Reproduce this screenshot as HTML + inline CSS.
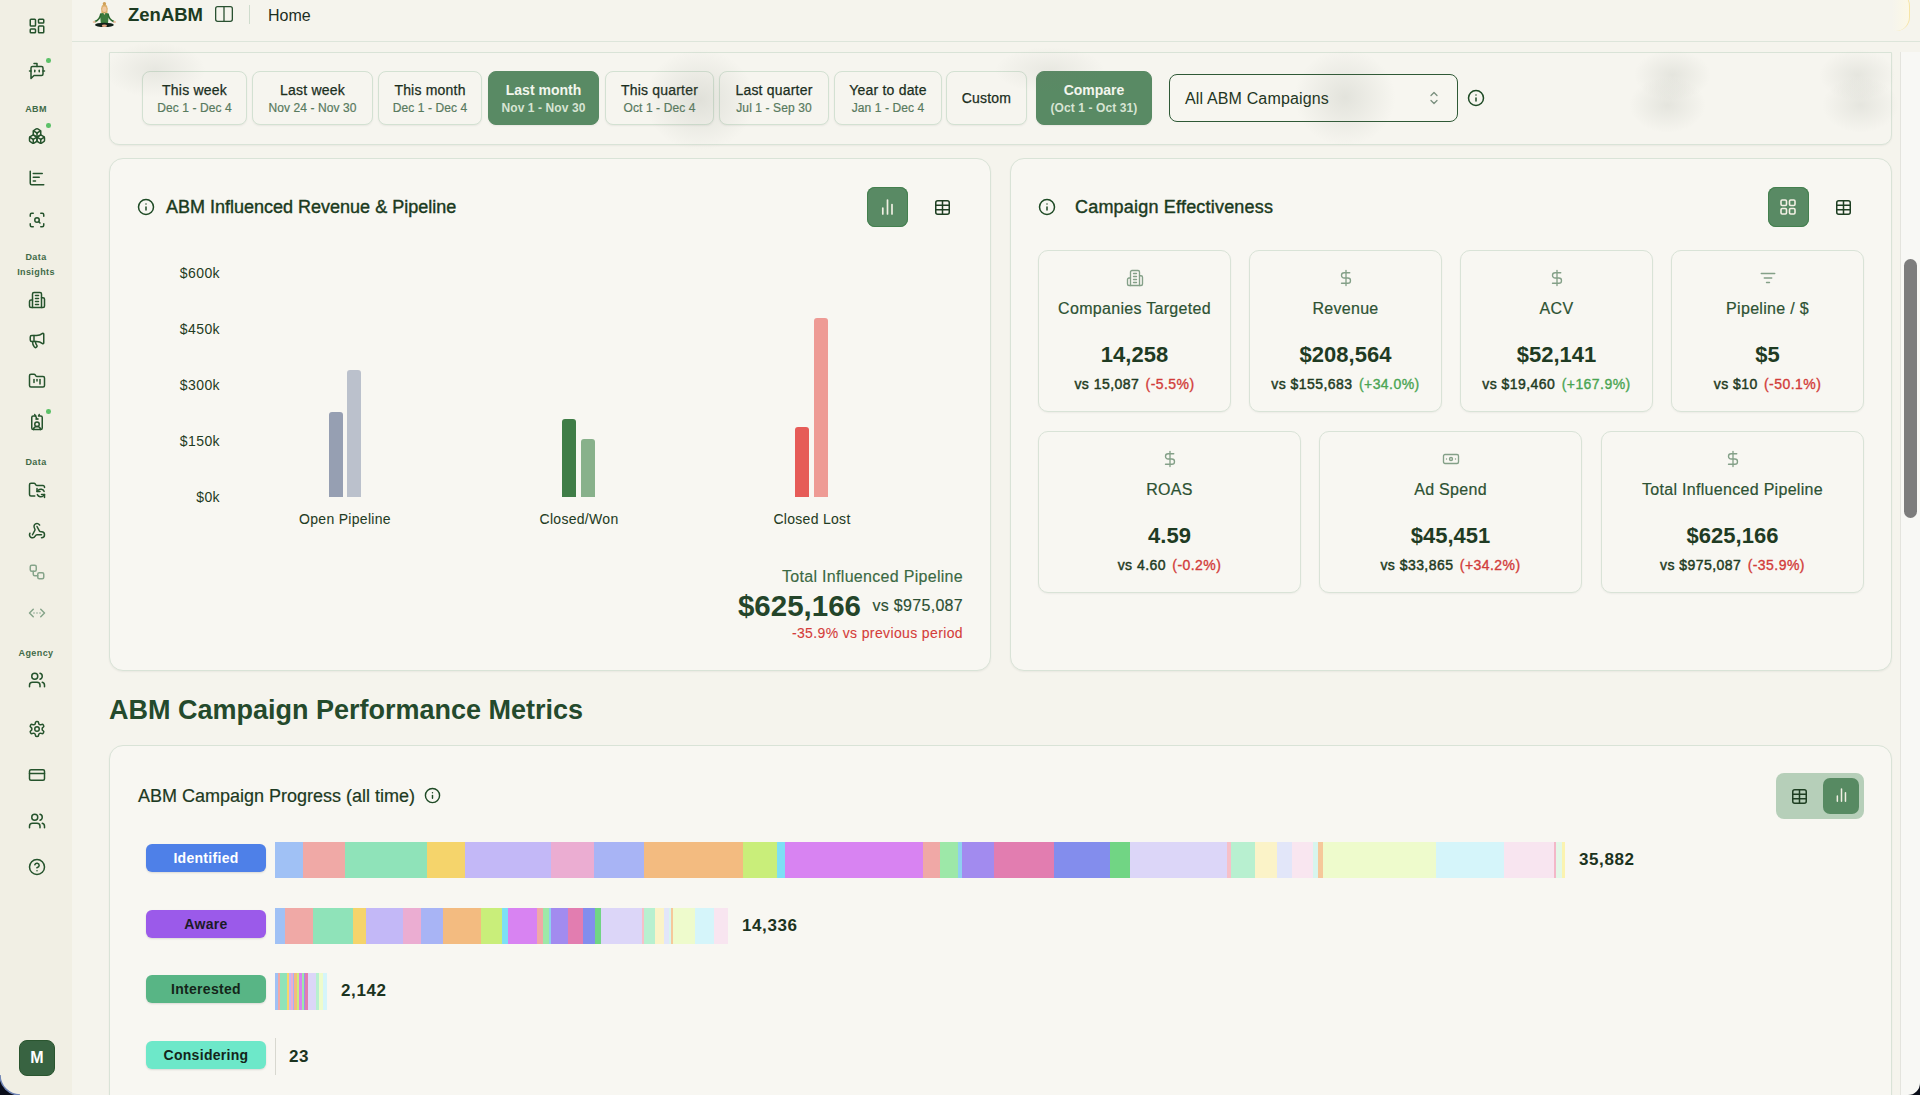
<!DOCTYPE html>
<html><head><meta charset="utf-8">
<style>
*{box-sizing:border-box;margin:0;padding:0}
html,body{width:1920px;height:1095px;overflow:hidden}
body{font-family:"Liberation Sans",sans-serif;background:#f5f4ed;color:#1e3a22;position:relative}
.abs{position:absolute}
.nw{white-space:nowrap}
#side{left:0;top:0;width:72px;height:1095px;background:#f1efe4}
#hdr{left:72px;top:0;width:1848px;height:42px;border-bottom:1px solid #dde5da;background:#f5f4ed}
.card{position:absolute;background:#f8f7f2;border:1px solid #d9e3d7;border-radius:14px;box-shadow:0 1px 2px rgba(0,0,0,.05)}
.btn{position:absolute;top:71px;height:54px;border:1px solid #d3e1d2;border-radius:8px;background:#f6f5ef;text-align:center;box-shadow:0 1px 2px rgba(0,0,0,.06)}
.btn .t{position:absolute;left:0;right:0;top:10px;font-size:14px;color:#1b2e1d;white-space:nowrap;letter-spacing:.2px;-webkit-text-stroke:.25px #1b2e1d}
.btn .d{position:absolute;left:0;right:0;top:29px;font-size:12px;color:#587a5e;white-space:nowrap;-webkit-text-stroke:.2px #587a5e;letter-spacing:.1px}
.btn.g{background:#598a64;border-color:#598a64}
.btn.g .t{color:#f3f6ee;font-weight:bold;letter-spacing:0;-webkit-text-stroke:0}
.btn.g .d{color:#d7e4d3;font-weight:bold;-webkit-text-stroke:0}
.dot{width:4.6px;height:4.6px;border-radius:50%;background:#5cc168;margin:.4px 0 0 .2px}
.slab{left:0;width:72px;text-align:center;font-size:9px;font-weight:bold;color:#3f6a47;line-height:12px;letter-spacing:.4px}
.ic{position:absolute;fill:none;stroke-linecap:round;stroke-linejoin:round}
.mc{position:absolute;border:1px solid #d9e3d7;border-radius:10px;background:#f8f7f2;box-shadow:0 1px 2px rgba(0,0,0,.05);text-align:center}
.mc .l{position:absolute;left:0;right:0;top:49px;font-size:16px;color:#2d5233;white-space:nowrap;letter-spacing:.3px;-webkit-text-stroke:.2px #2d5233}
.mc .v{position:absolute;left:0;right:0;top:91px;font-size:22px;font-weight:bold;color:#1f3b23;white-space:nowrap}
.mc .c{position:absolute;left:0;right:0;top:125px;font-size:14px;color:#1f3b23;white-space:nowrap;letter-spacing:.45px;-webkit-text-stroke:.45px #1f3b23}
.mc .c span{margin-left:2px;-webkit-text-stroke:.35px currentColor}
.red{color:#d23c3a}.grn{color:#4aa552}
.ylab{position:absolute;left:140px;width:80px;text-align:right;font-size:14px;color:#1f3b23;letter-spacing:.4px}
.bar{position:absolute;border-radius:3px 3px 0 0}
.xlab{position:absolute;width:160px;text-align:center;font-size:14px;color:#1f3b23;top:511px;letter-spacing:.3px;-webkit-text-stroke:.05px #1f3b23}
.badge{position:absolute;left:146px;width:120px;height:28px;border-radius:6px;text-align:center;font-size:14px;font-weight:bold;line-height:28px;letter-spacing:.3px;box-shadow:0 1px 2px rgba(0,0,0,.12)}
.num{position:absolute;font-size:17px;font-weight:bold;color:#1c3320;margin-top:0;letter-spacing:.6px}
.seg{position:absolute}
</style></head>
<body>
<div id="side" class="abs"></div>
<svg class="abs" style="left:27.5px;top:16.5px" width="18" height="18" viewBox="0 0 24 24" fill="none" stroke="#25532c" stroke-width="2" stroke-linecap="round" stroke-linejoin="round"><rect x="3" y="3" width="7" height="9" rx="1"/><rect x="14" y="3" width="7" height="5" rx="1"/><rect x="14" y="12" width="7" height="9" rx="1"/><rect x="3" y="16" width="7" height="5" rx="1"/></svg>
<svg class="abs" style="left:27.5px;top:62px" width="18" height="18" viewBox="0 0 24 24" fill="none" stroke="#25532c" stroke-width="2" stroke-linecap="round" stroke-linejoin="round"><path d="M12 6V2H8"/><path d="m8 18-4 4V8a2 2 0 0 1 2-2h12a2 2 0 0 1 2 2v8a2 2 0 0 1-2 2Z"/><path d="M2 12h2"/><path d="M9 11v2"/><path d="M15 11v2"/><path d="M20 12h2"/></svg>
<div class="abs dot" style="left:46px;top:58px"></div>
<svg class="abs" style="left:27.5px;top:127px" width="18" height="18" viewBox="0 0 24 24" fill="none" stroke="#25532c" stroke-width="2" stroke-linecap="round" stroke-linejoin="round"><path d="M2.97 12.92A2 2 0 0 0 2 14.63v3.24a2 2 0 0 0 .97 1.71l3 1.8a2 2 0 0 0 2.06 0L12 19v-5.5l-5-3-4.03 2.42Z"/><path d="m7 16.5-4.74-2.85"/><path d="m7 16.5 5-3"/><path d="M7 16.5v5.17"/><path d="M12 13.5V19l3.97 2.38a2 2 0 0 0 2.06 0l3-1.8a2 2 0 0 0 .97-1.71v-3.24a2 2 0 0 0-.97-1.71L17 10.5l-5 3Z"/><path d="m17 16.5-5-3"/><path d="m17 16.5 4.74-2.85"/><path d="M17 16.5v5.17"/><path d="M7.97 4.42A2 2 0 0 0 7 6.13v4.37l5 3 5-3V6.13a2 2 0 0 0-.97-1.71l-3-1.8a2 2 0 0 0-2.06 0l-3 1.8Z"/><path d="M12 8 7.26 5.15"/><path d="m12 8 4.74-2.85"/><path d="M12 13.5V8"/></svg>
<div class="abs dot" style="left:46px;top:123px"></div>
<svg class="abs" style="left:27.5px;top:169px" width="18" height="18" viewBox="0 0 24 24" fill="none" stroke="#25532c" stroke-width="2" stroke-linecap="round" stroke-linejoin="round"><path d="M3 3v16a2 2 0 0 0 2 2h16"/><path d="M7 11h8"/><path d="M7 16h3"/><path d="M7 6h12"/></svg>
<svg class="abs" style="left:27.5px;top:210.5px" width="18" height="18" viewBox="0 0 24 24" fill="none" stroke="#25532c" stroke-width="2" stroke-linecap="round" stroke-linejoin="round"><path d="M3 7V5a2 2 0 0 1 2-2h2"/><path d="M17 3h2a2 2 0 0 1 2 2v2"/><path d="M21 17v2a2 2 0 0 1-2 2h-2"/><path d="M7 21H5a2 2 0 0 1-2-2v-2"/><circle cx="12" cy="12" r="3"/><path d="m16 16-1.9-1.9"/></svg>
<svg class="abs" style="left:27.5px;top:290.5px" width="18" height="18" viewBox="0 0 24 24" fill="none" stroke="#25532c" stroke-width="2" stroke-linecap="round" stroke-linejoin="round"><path d="M6 22V4a2 2 0 0 1 2-2h8a2 2 0 0 1 2 2v18Z"/><path d="M6 12H4a2 2 0 0 0-2 2v6a2 2 0 0 0 2 2h2"/><path d="M18 9h2a2 2 0 0 1 2 2v9a2 2 0 0 1-2 2h-2"/><path d="M10 6h4"/><path d="M10 10h4"/><path d="M10 14h4"/><path d="M10 18h4"/></svg>
<svg class="abs" style="left:27.5px;top:331px" width="18" height="18" viewBox="0 0 24 24" fill="none" stroke="#25532c" stroke-width="2" stroke-linecap="round" stroke-linejoin="round"><path d="M11 6a13 13 0 0 0 8.4-2.8A1 1 0 0 1 21 4v12a1 1 0 0 1-1.6.8A13 13 0 0 0 11 14H5a2 2 0 0 1-2-2V8a2 2 0 0 1 2-2z"/><path d="M6 14a12 12 0 0 0 2.4 7.2 2 2 0 0 0 3.2-2.4A8 8 0 0 1 10 14"/><path d="M8 6v8"/></svg>
<svg class="abs" style="left:27.5px;top:372px" width="18" height="18" viewBox="0 0 24 24" fill="none" stroke="#25532c" stroke-width="2" stroke-linecap="round" stroke-linejoin="round"><path d="M4 20h16a2 2 0 0 0 2-2V8a2 2 0 0 0-2-2h-7.93a2 2 0 0 1-1.66-.9l-.82-1.2A2 2 0 0 0 7.93 3H4a2 2 0 0 0-2 2v13c0 1.1.9 2 2 2Z"/><path d="M8 10v4"/><path d="M12 10v2"/><path d="M16 10v6"/></svg>
<svg class="abs" style="left:27.5px;top:413px" width="18" height="18" viewBox="0 0 24 24" fill="none" stroke="#25532c" stroke-width="2" stroke-linecap="round" stroke-linejoin="round"><path d="M13.5 8h-3"/><path d="m15 2-1 2h3a2 2 0 0 1 2 2v14a2 2 0 0 1-2 2H7a2 2 0 0 1-2-2V6a2 2 0 0 1 2-2h3.5"/><path d="M16.899 22A5 5 0 0 0 7.1 22"/><path d="m9 2 3 6"/><circle cx="12" cy="15" r="3"/></svg>
<div class="abs dot" style="left:46px;top:409px"></div>
<svg class="abs" style="left:27.5px;top:481px" width="18" height="18" viewBox="0 0 24 24" fill="none" stroke="#25532c" stroke-width="2" stroke-linecap="round" stroke-linejoin="round"><path d="M9 20H4a2 2 0 0 1-2-2V5a2 2 0 0 1 2-2h3.9a2 2 0 0 1 1.69.9l.81 1.2a2 2 0 0 0 1.67.9H20a2 2 0 0 1 2 2v.5"/><path d="M12 10v4h4"/><path d="m12 14 1.535-1.605a5 5 0 0 1 8 1.5"/><path d="M22 22v-4h-4"/><path d="m22 18-1.535 1.605a5 5 0 0 1-8-1.5"/></svg>
<svg class="abs" style="left:27.5px;top:522px" width="18" height="18" viewBox="0 0 24 24" fill="none" stroke="#25532c" stroke-width="2" stroke-linecap="round" stroke-linejoin="round"><path d="M18 16.98h-5.99c-1.1 0-1.95.94-2.48 1.9A4 4 0 0 1 2 17c.01-.7.2-1.4.57-2"/><path d="m6 17 3.13-5.78c.53-.97.1-2.18-.5-3.1a4 4 0 1 1 6.89-4.06"/><path d="m12 6 3.13 5.73C15.66 12.7 16.9 13 18 13a4 4 0 0 1 0 8"/></svg>
<svg class="abs" style="left:27.5px;top:563px" width="18" height="18" viewBox="0 0 24 24" fill="none" stroke="#86a48a" stroke-width="2" stroke-linecap="round" stroke-linejoin="round"><rect width="8" height="8" x="3" y="3" rx="2"/><path d="M7 11v4a2 2 0 0 0 2 2h4"/><rect width="8" height="8" x="13" y="13" rx="2"/></svg>
<svg class="abs" style="left:27.5px;top:604px" width="18" height="18" viewBox="0 0 24 24" fill="none" stroke="#86a48a" stroke-width="2" stroke-linecap="round" stroke-linejoin="round"><path d="M12 12h.01"/><path d="M16 12h.01"/><path d="m17 7 5 5-5 5"/><path d="m7 7-5 5 5 5"/><path d="M8 12h.01"/></svg>
<svg class="abs" style="left:27.5px;top:671px" width="18" height="18" viewBox="0 0 24 24" fill="none" stroke="#25532c" stroke-width="2" stroke-linecap="round" stroke-linejoin="round"><path d="M16 21v-2a4 4 0 0 0-4-4H6a4 4 0 0 0-4 4v2"/><circle cx="9" cy="7" r="4"/><path d="M22 21v-2a4 4 0 0 0-3-3.87"/><path d="M16 3.13a4 4 0 0 1 0 7.75"/></svg>
<svg class="abs" style="left:27.5px;top:719.5px" width="18" height="18" viewBox="0 0 24 24" fill="none" stroke="#25532c" stroke-width="2" stroke-linecap="round" stroke-linejoin="round"><path d="M12.22 2h-.44a2 2 0 0 0-2 2v.18a2 2 0 0 1-1 1.73l-.43.25a2 2 0 0 1-2 0l-.15-.08a2 2 0 0 0-2.73.73l-.22.38a2 2 0 0 0 .73 2.73l.15.1a2 2 0 0 1 1 1.72v.51a2 2 0 0 1-1 1.74l-.15.09a2 2 0 0 0-.73 2.73l.22.38a2 2 0 0 0 2.73.73l.15-.08a2 2 0 0 1 2 0l.43.25a2 2 0 0 1 1 1.73V20a2 2 0 0 0 2 2h.44a2 2 0 0 0 2-2v-.18a2 2 0 0 1 1-1.73l.43-.25a2 2 0 0 1 2 0l.15.08a2 2 0 0 0 2.73-.73l.22-.39a2 2 0 0 0-.73-2.73l-.15-.08a2 2 0 0 1-1-1.74v-.5a2 2 0 0 1 1-1.74l.15-.09a2 2 0 0 0 .73-2.73l-.22-.38a2 2 0 0 0-2.73-.73l-.15.08a2 2 0 0 1-2 0l-.43-.25a2 2 0 0 1-1-1.73V4a2 2 0 0 0-2-2z"/><circle cx="12" cy="12" r="3"/></svg>
<svg class="abs" style="left:27.5px;top:766px" width="18" height="18" viewBox="0 0 24 24" fill="none" stroke="#25532c" stroke-width="2" stroke-linecap="round" stroke-linejoin="round"><rect width="20" height="14" x="2" y="5" rx="2"/><line x1="2" x2="22" y1="10" y2="10"/></svg>
<svg class="abs" style="left:27.5px;top:812px" width="18" height="18" viewBox="0 0 24 24" fill="none" stroke="#25532c" stroke-width="2" stroke-linecap="round" stroke-linejoin="round"><path d="M16 21v-2a4 4 0 0 0-4-4H6a4 4 0 0 0-4 4v2"/><circle cx="9" cy="7" r="4"/><path d="M22 21v-2a4 4 0 0 0-3-3.87"/><path d="M16 3.13a4 4 0 0 1 0 7.75"/></svg>
<svg class="abs" style="left:27.5px;top:858px" width="18" height="18" viewBox="0 0 24 24" fill="none" stroke="#25532c" stroke-width="2" stroke-linecap="round" stroke-linejoin="round"><circle cx="12" cy="12" r="10"/><path d="M9.09 9a3 3 0 0 1 5.83 1c0 2-3 3-3 3"/><path d="M12 17h.01"/></svg>
<div class="abs slab" style="top:103px">ABM</div>
<div class="abs slab" style="top:251px">Data</div>
<div class="abs slab" style="top:265.5px">Insights</div>
<div class="abs slab" style="top:456px">Data</div>
<div class="abs slab" style="top:647px">Agency</div>
<div id="hdr" class="abs"></div>

<svg class="abs" style="left:86px;top:0px" width="40" height="32" viewBox="0 0 40 32">
 <path d="M15.3 8 Q15.2 13 15.6 13.5 L21.2 13.5 Q21.6 13 21.5 8Z" fill="#dcb06c"/>
 <ellipse cx="18.4" cy="8.3" rx="3.1" ry="3.9" fill="#dcb06c"/>
 <circle cx="18.4" cy="3.8" r="1.7" fill="#cf9f55"/>
 <ellipse cx="18.4" cy="9.3" rx="2.1" ry="2.7" fill="#f0c8a0"/>
 <path d="M15.5 13.2 Q18.4 12.4 21.3 13.2 Q22.8 14 22.6 17 L22 23.2 L14.8 23.2 L14.2 17 Q14 14 15.5 13.2Z" fill="#3c7a3c"/>
 <path d="M17.3 12.9 L19.5 12.9 L18.4 15Z" fill="#f0c8a0"/>
 <path d="M14.8 14 Q14 19.5 9 21.6" fill="none" stroke="#2f6a30" stroke-width="1.7" stroke-linecap="round"/>
 <path d="M22 14 Q22.8 19.5 27.8 21.6" fill="none" stroke="#2f6a30" stroke-width="1.7" stroke-linecap="round"/>
 <ellipse cx="8.2" cy="21.9" rx="1.5" ry="1" fill="#f0bfa0"/><ellipse cx="28.6" cy="21.9" rx="1.5" ry="1" fill="#f0bfa0"/>
 <ellipse cx="18.4" cy="24.9" rx="9.4" ry="2.2" fill="#12201a"/>
 <ellipse cx="18.4" cy="25.8" rx="2.6" ry="1.2" fill="#e6a683"/>
</svg>
<div class="abs nw" style="left:128px;top:4px;font-size:18.5px;font-weight:bold;color:#1c3a21">ZenABM</div>
<svg class="ic" style="left:214.5px;top:6.3px" width="18" height="16" viewBox="0 0 18 16" stroke="#2a5131" stroke-width="1.3"><rect x="0.65" y="0.65" width="16.7" height="14.7" rx="2"/><path d="M9 0.65v14.7"/></svg>
<div class="abs" style="left:249px;top:5px;width:1px;height:19px;background:#cfdccd"></div>
<div class="abs nw" style="left:268px;top:6.5px;font-size:16px;color:#1c2e1f">Home</div>
<div class="abs" style="left:1880px;top:-8px;width:30px;height:39px;border-right:1.5px solid #f6e4a6;border-radius:0 14px 14px 0;background:linear-gradient(90deg,rgba(252,248,232,0) 40%,#fcf8e6)"></div>


<!-- filter panel -->
<div class="card" style="left:109px;top:52px;width:1783px;height:93px;border-radius:0 0 10px 10px;background:#f6f5ef"></div>
<div class="btn" style="left:142px;width:105px"><div class="t">This week</div><div class="d">Dec 1 - Dec 4</div></div>
<div class="btn" style="left:252px;width:121px"><div class="t">Last week</div><div class="d">Nov 24 - Nov 30</div></div>
<div class="btn" style="left:378px;width:104px"><div class="t">This month</div><div class="d">Dec 1 - Dec 4</div></div>
<div class="btn g" style="left:488px;width:111px"><div class="t">Last month</div><div class="d">Nov 1 - Nov 30</div></div>
<div class="btn" style="left:605px;width:109px"><div class="t">This quarter</div><div class="d">Oct 1 - Dec 4</div></div>
<div class="btn" style="left:719px;width:110px"><div class="t">Last quarter</div><div class="d">Jul 1 - Sep 30</div></div>
<div class="btn" style="left:834px;width:108px"><div class="t">Year to date</div><div class="d">Jan 1 - Dec 4</div></div>
<div class="btn" style="left:946px;width:81px"><div class="t" style="top:18px">Custom</div></div>
<div class="btn g" style="left:1036px;width:116px"><div class="t">Compare</div><div class="d">(Oct 1 - Oct 31)</div></div>
<div class="abs" style="left:1169px;top:74px;width:289px;height:48px;border:1.5px solid #2f5936;border-radius:8px;background:#f7f6f0"></div>
<div class="abs nw" style="left:1185px;top:90px;font-size:16px;color:#1e3522;letter-spacing:.15px">All ABM Campaigns</div>
<svg class="ic" style="left:1427px;top:89px" width="14" height="18" viewBox="0 0 14 18" stroke="#7a8f7e" stroke-width="1.3"><path d="M4 6.5l3-3 3 3"/><path d="M4 11.5l3 3 3-3"/></svg>
<svg class="ic" style="left:1467px;top:89px" width="18" height="18" viewBox="0 0 24 24" stroke="#1e4a25" stroke-width="2"><circle cx="12" cy="12" r="10"/><path d="M12 16v-4"/><path d="M12 8h.01"/></svg>

<div class="abs" style="left:100px;top:40px;width:110px;height:60px;background:radial-gradient(ellipse at center,rgba(110,118,105,.11),rgba(110,118,105,0) 65%)"></div>
<div class="abs" style="left:640px;top:45px;width:120px;height:110px;background:radial-gradient(ellipse at center,rgba(110,118,105,.16),rgba(110,118,105,0) 65%)"></div>
<div class="abs" style="left:990px;top:45px;width:120px;height:50px;background:radial-gradient(ellipse at center,rgba(110,118,105,.10),rgba(110,118,105,0) 65%)"></div>
<div class="abs" style="left:1290px;top:45px;width:110px;height:105px;background:radial-gradient(ellipse at center,rgba(110,118,105,.15),rgba(110,118,105,0) 65%)"></div>
<div class="abs" style="left:1630px;top:45px;width:85px;height:60px;background:radial-gradient(ellipse 45% 42% at 50% 50%,rgba(110,118,105,.13),rgba(110,118,105,0))"></div>
<div class="abs" style="left:1625px;top:72px;width:85px;height:66px;background:radial-gradient(ellipse 45% 42% at 50% 50%,rgba(110,118,105,.13),rgba(110,118,105,0))"></div>
<div class="abs" style="left:1815px;top:45px;width:85px;height:60px;background:radial-gradient(ellipse 45% 42% at 50% 50%,rgba(110,118,105,.12),rgba(110,118,105,0))"></div>
<div class="abs" style="left:1818px;top:72px;width:85px;height:66px;background:radial-gradient(ellipse 45% 42% at 50% 50%,rgba(110,118,105,.12),rgba(110,118,105,0))"></div>
<!-- card 1 -->
<div class="card" style="left:109px;top:158px;width:882px;height:513px"></div>
<svg class="ic" style="left:137px;top:198px" width="18" height="18" viewBox="0 0 24 24" stroke="#1e4a25" stroke-width="2"><circle cx="12" cy="12" r="10"/><path d="M12 16v-4"/><path d="M12 8h.01"/></svg>
<div class="abs nw" style="left:166px;top:197px;font-size:18px;color:#1b3a20;-webkit-text-stroke:.4px #1b3a20">ABM Influenced Revenue &amp; Pipeline</div>
<div class="abs" style="left:867px;top:187px;width:41px;height:40px;border-radius:8px;background:#598a64;box-shadow:inset 0 0 0 1px #44804f"></div>
<svg class="ic" style="left:879px;top:199px" width="17" height="17" viewBox="0 0 17 17" stroke="#f1efe3" stroke-width="1.7" stroke-linecap="butt"><path d="M3.8 9v6"/><path d="M8.5 1v14"/><path d="M13 5.5v9.5"/></svg>
<svg class="ic" style="left:935px;top:199.5px" width="15" height="15" viewBox="0 0 15 15" stroke="#1e3f22" stroke-width="1.5"><rect x="0.75" y="0.75" width="13.5" height="13.5" rx="2"/><path d="M0.75 5.2h13.5"/><path d="M0.75 9.8h13.5"/><path d="M7.5 0.75v13.5"/></svg>

<div class="ylab" style="top:265px">$600k</div>
<div class="ylab" style="top:321px">$450k</div>
<div class="ylab" style="top:377px">$300k</div>
<div class="ylab" style="top:433px">$150k</div>
<div class="ylab" style="top:489px">$0k</div>
<div class="bar" style="left:329px;top:412px;width:14px;height:85px;background:#969fb2"></div>
<div class="bar" style="left:347px;top:370px;width:14px;height:127px;background:#bbc1cc"></div>
<div class="bar" style="left:562px;top:419px;width:14px;height:78px;background:#3f7d47"></div>
<div class="bar" style="left:581px;top:439px;width:14px;height:58px;background:#88b18b"></div>
<div class="bar" style="left:795px;top:427px;width:14px;height:70px;background:#e65c58"></div>
<div class="bar" style="left:814px;top:318px;width:14px;height:179px;background:#ee9b95"></div>
<div class="xlab" style="left:265px">Open Pipeline</div>
<div class="xlab" style="left:499px">Closed/Won</div>
<div class="xlab" style="left:732px">Closed Lost</div>

<div class="abs nw" style="right:957px;top:568px;font-size:16px;color:#3b6943;letter-spacing:.3px;-webkit-text-stroke:.15px #3b6943">Total Influenced Pipeline</div>
<div class="abs nw" style="right:1059px;top:589px;font-size:29.5px;font-weight:bold;color:#24452a">$625,166</div>
<div class="abs nw" style="right:957px;top:597px;font-size:16px;color:#2c4f33;letter-spacing:.3px;-webkit-text-stroke:.15px #2c4f33">vs $975,087</div>
<div class="abs nw" style="right:957px;top:625px;font-size:14px;color:#d43d3a;letter-spacing:.37px;-webkit-text-stroke:.1px #d43d3a">-35.9% vs previous period</div>

<!-- card 2 -->
<div class="card" style="left:1010px;top:158px;width:882px;height:513px"></div>
<svg class="ic" style="left:1038px;top:198px" width="18" height="18" viewBox="0 0 24 24" stroke="#1e4a25" stroke-width="2"><circle cx="12" cy="12" r="10"/><path d="M12 16v-4"/><path d="M12 8h.01"/></svg>
<div class="abs nw" style="left:1075px;top:197px;font-size:18px;color:#1b3a20;-webkit-text-stroke:.4px #1b3a20;letter-spacing:.2px">Campaign Effectiveness</div>
<div class="abs" style="left:1767.5px;top:187px;width:41.5px;height:40px;border-radius:8px;background:#598a64;box-shadow:inset 0 0 0 1px #44804f"></div>
<svg class="ic" style="left:1780px;top:199px" width="16" height="16" viewBox="0 0 16 16" stroke="#f3f0e4" stroke-width="1.6"><rect x="1" y="1" width="5.5" height="5.5" rx="1.2"/><rect x="9.5" y="1" width="5.5" height="5.5" rx="1.2"/><rect x="1" y="9.5" width="5.5" height="5.5" rx="1.2"/><rect x="9.5" y="9.5" width="5.5" height="5.5" rx="1.2"/></svg>
<svg class="ic" style="left:1835.5px;top:199.5px" width="15" height="15" viewBox="0 0 15 15" stroke="#1e3f22" stroke-width="1.5"><rect x="0.75" y="0.75" width="13.5" height="13.5" rx="2"/><path d="M0.75 5.2h13.5"/><path d="M0.75 9.8h13.5"/><path d="M7.5 0.75v13.5"/></svg>
<div class="mc" style="left:1038px;top:250px;width:193px;height:162px"><div class="l">Companies Targeted</div><div class="v">14,258</div><div class="c">vs 15,087 <span class="red">(-5.5%)</span></div></div>
<svg class="ic" style="left:1125.5px;top:269px" width="18" height="18" viewBox="0 0 24 24" stroke="#84a088" stroke-width="1.8"><path d="M6 22V4a2 2 0 0 1 2-2h8a2 2 0 0 1 2 2v18Z"/><path d="M6 12H4a2 2 0 0 0-2 2v6a2 2 0 0 0 2 2h2"/><path d="M18 9h2a2 2 0 0 1 2 2v9a2 2 0 0 1-2 2h-2"/><path d="M10 6h4"/><path d="M10 10h4"/><path d="M10 14h4"/><path d="M10 18h4"/></svg>
<div class="mc" style="left:1249px;top:250px;width:193px;height:162px"><div class="l">Revenue</div><div class="v">$208,564</div><div class="c">vs $155,683 <span class="grn">(+34.0%)</span></div></div>
<svg class="ic" style="left:1336.5px;top:269px" width="18" height="18" viewBox="0 0 24 24" stroke="#84a088" stroke-width="1.8"><line x1="12" x2="12" y1="2" y2="22"/><path d="M17 5H9.5a3.5 3.5 0 0 0 0 7h5a3.5 3.5 0 0 1 0 7H6"/></svg>
<div class="mc" style="left:1460px;top:250px;width:193px;height:162px"><div class="l">ACV</div><div class="v">$52,141</div><div class="c">vs $19,460 <span class="grn">(+167.9%)</span></div></div>
<svg class="ic" style="left:1547.5px;top:269px" width="18" height="18" viewBox="0 0 24 24" stroke="#84a088" stroke-width="1.8"><line x1="12" x2="12" y1="2" y2="22"/><path d="M17 5H9.5a3.5 3.5 0 0 0 0 7h5a3.5 3.5 0 0 1 0 7H6"/></svg>
<div class="mc" style="left:1671px;top:250px;width:193px;height:162px"><div class="l">Pipeline / $</div><div class="v">$5</div><div class="c">vs $10 <span class="red">(-50.1%)</span></div></div>
<svg class="ic" style="left:1758.5px;top:269px" width="18" height="18" viewBox="0 0 24 24" stroke="#84a088" stroke-width="1.8"><path d="M3 6h18"/><path d="M7 12h10"/><path d="M10 18h4"/></svg>
<div class="mc" style="left:1038px;top:431px;width:263px;height:162px"><div class="l">ROAS</div><div class="v">4.59</div><div class="c">vs 4.60 <span class="red">(-0.2%)</span></div></div>
<svg class="ic" style="left:1160.5px;top:450px" width="18" height="18" viewBox="0 0 24 24" stroke="#84a088" stroke-width="1.8"><line x1="12" x2="12" y1="2" y2="22"/><path d="M17 5H9.5a3.5 3.5 0 0 0 0 7h5a3.5 3.5 0 0 1 0 7H6"/></svg>
<div class="mc" style="left:1319px;top:431px;width:263px;height:162px"><div class="l">Ad Spend</div><div class="v">$45,451</div><div class="c">vs $33,865 <span class="red">(+34.2%)</span></div></div>
<svg class="ic" style="left:1441.5px;top:450px" width="18" height="18" viewBox="0 0 24 24" stroke="#84a088" stroke-width="1.8"><rect width="20" height="12" x="2" y="6" rx="2"/><circle cx="12" cy="12" r="2"/><path d="M6 12h.01M18 12h.01"/></svg>
<div class="mc" style="left:1601px;top:431px;width:263px;height:162px"><div class="l">Total Influenced Pipeline</div><div class="v">$625,166</div><div class="c">vs $975,087 <span class="red">(-35.9%)</span></div></div>
<svg class="ic" style="left:1723.5px;top:450px" width="18" height="18" viewBox="0 0 24 24" stroke="#84a088" stroke-width="1.8"><line x1="12" x2="12" y1="2" y2="22"/><path d="M17 5H9.5a3.5 3.5 0 0 0 0 7h5a3.5 3.5 0 0 1 0 7H6"/></svg>

<!-- section 3 -->
<div class="abs nw" style="left:109px;top:695px;font-size:27px;font-weight:bold;color:#244a2c">ABM Campaign Performance Metrics</div>
<div class="card" style="left:109px;top:745px;width:1783px;height:400px"></div>
<div class="abs nw" style="left:138px;top:786px;font-size:18px;color:#1d3a22;-webkit-text-stroke:.2px #1d3a22">ABM Campaign Progress (all time)</div>
<svg class="ic" style="left:424px;top:787px" width="17" height="17" viewBox="0 0 24 24" stroke="#1e4a25" stroke-width="2"><circle cx="12" cy="12" r="10"/><path d="M12 16v-4"/><path d="M12 8h.01"/></svg>
<div class="abs" style="left:1776px;top:773px;width:88px;height:46px;border-radius:8px;background:#b6cfb9"></div>
<div class="abs" style="left:1823px;top:778px;width:36px;height:36px;border-radius:7px;background:#578a62"></div>
<svg class="ic" style="left:1834px;top:788px" width="15" height="15" viewBox="0 0 17 17" stroke="#f1efe3" stroke-width="1.7" stroke-linecap="butt"><path d="M3.8 9v6"/><path d="M8.5 1v14"/><path d="M13 5.5v9.5"/></svg>
<svg class="ic" style="left:1792px;top:789px" width="15" height="15" viewBox="0 0 15 15" stroke="#1e3f22" stroke-width="1.5"><rect x="0.75" y="0.75" width="13.5" height="13.5" rx="2"/><path d="M0.75 5.2h13.5"/><path d="M0.75 9.8h13.5"/><path d="M7.5 0.75v13.5"/></svg>

<div class="badge" style="top:844px;background:#4e80e8;color:#fff">Identified</div>
<div class="badge" style="top:910px;background:#9b5aea;color:#1a1a26">Aware</div>
<div class="badge" style="top:975px;background:#58b585;color:#14251a">Interested</div>
<div class="badge" style="top:1041px;background:#6de8c9;color:#14251a">Considering</div>
<div class="seg" style="left:275px;top:842px;width:28.1px;height:36px;background:#a0c1f5"></div>
<div class="seg" style="left:302.7px;top:842px;width:43.0px;height:36px;background:#f0a9a6"></div>
<div class="seg" style="left:345.3px;top:842px;width:82.1px;height:36px;background:#8fe3b9"></div>
<div class="seg" style="left:427px;top:842px;width:38.3px;height:36px;background:#f5d46b"></div>
<div class="seg" style="left:464.9px;top:842px;width:86.8px;height:36px;background:#c3b8f7"></div>
<div class="seg" style="left:551.3px;top:842px;width:43.1px;height:36px;background:#ebadd2"></div>
<div class="seg" style="left:594px;top:842px;width:50.3px;height:36px;background:#a8b4f5"></div>
<div class="seg" style="left:643.9px;top:842px;width:99.5px;height:36px;background:#f3bb80"></div>
<div class="seg" style="left:743px;top:842px;width:34.4px;height:36px;background:#c9ee7a"></div>
<div class="seg" style="left:777px;top:842px;width:8.4px;height:36px;background:#7ddff5"></div>
<div class="seg" style="left:785px;top:842px;width:138.2px;height:36px;background:#d883f2"></div>
<div class="seg" style="left:922.8px;top:842px;width:17.2px;height:36px;background:#f0a8a6"></div>
<div class="seg" style="left:939.6px;top:842px;width:19.0px;height:36px;background:#9de8a8"></div>
<div class="seg" style="left:958.2px;top:842px;width:4.4px;height:36px;background:#8fd0f0"></div>
<div class="seg" style="left:962.2px;top:842px;width:32.4px;height:36px;background:#a28bef"></div>
<div class="seg" style="left:994.2px;top:842px;width:60.6px;height:36px;background:#e27db0"></div>
<div class="seg" style="left:1054.4px;top:842px;width:55.8px;height:36px;background:#838ded"></div>
<div class="seg" style="left:1109.8px;top:842px;width:20.2px;height:36px;background:#71d584"></div>
<div class="seg" style="left:1129.6px;top:842px;width:97.8px;height:36px;background:#dcd6f8"></div>
<div class="seg" style="left:1227px;top:842px;width:4.4px;height:36px;background:#f6c0c8"></div>
<div class="seg" style="left:1231px;top:842px;width:24.5px;height:36px;background:#b8f0d0"></div>
<div class="seg" style="left:1255.1px;top:842px;width:21.8px;height:36px;background:#fbf3c8"></div>
<div class="seg" style="left:1276.5px;top:842px;width:15.9px;height:36px;background:#e2e6f9"></div>
<div class="seg" style="left:1292px;top:842px;width:20.9px;height:36px;background:#f9e6f0"></div>
<div class="seg" style="left:1312.5px;top:842px;width:5.6px;height:36px;background:#d8f5ee"></div>
<div class="seg" style="left:1317.7px;top:842px;width:5.5px;height:36px;background:#f6c89a"></div>
<div class="seg" style="left:1322.8px;top:842px;width:113.2px;height:36px;background:#eefbcc"></div>
<div class="seg" style="left:1435.6px;top:842px;width:69.0px;height:36px;background:#d5f5fa"></div>
<div class="seg" style="left:1504.2px;top:842px;width:50.2px;height:36px;background:#f8e5f0"></div>
<div class="seg" style="left:1554px;top:842px;width:2.0px;height:36px;background:#f3b8c8"></div>
<div class="seg" style="left:1555.6px;top:842px;width:7.1px;height:36px;background:#e3f7e8"></div>
<div class="seg" style="left:1562.3px;top:842px;width:3.1px;height:36px;background:#fbf3b0"></div>
<div class="seg" style="left:275px;top:908px;width:10.6px;height:36px;background:#a0c1f5"></div>
<div class="seg" style="left:285.2px;top:908px;width:28.1px;height:36px;background:#f0a9a6"></div>
<div class="seg" style="left:312.9px;top:908px;width:40.8px;height:36px;background:#8fe3b9"></div>
<div class="seg" style="left:353.3px;top:908px;width:13.2px;height:36px;background:#f5d46b"></div>
<div class="seg" style="left:366.1px;top:908px;width:37.2px;height:36px;background:#c3b8f7"></div>
<div class="seg" style="left:402.9px;top:908px;width:18.3px;height:36px;background:#ebadd2"></div>
<div class="seg" style="left:420.8px;top:908px;width:22.6px;height:36px;background:#a8b4f5"></div>
<div class="seg" style="left:443px;top:908px;width:38.3px;height:36px;background:#f3bb80"></div>
<div class="seg" style="left:480.9px;top:908px;width:21.9px;height:36px;background:#c9ee7a"></div>
<div class="seg" style="left:502.4px;top:908px;width:6.3px;height:36px;background:#7ddff5"></div>
<div class="seg" style="left:508.3px;top:908px;width:29.2px;height:36px;background:#d883f2"></div>
<div class="seg" style="left:537.1px;top:908px;width:6.2px;height:36px;background:#f0a8a6"></div>
<div class="seg" style="left:542.9px;top:908px;width:6.9px;height:36px;background:#9de8a8"></div>
<div class="seg" style="left:549.4px;top:908px;width:2.0px;height:36px;background:#8fd0f0"></div>
<div class="seg" style="left:551px;top:908px;width:17.8px;height:36px;background:#a28bef"></div>
<div class="seg" style="left:568.4px;top:908px;width:15.4px;height:36px;background:#e27db0"></div>
<div class="seg" style="left:583.4px;top:908px;width:11.7px;height:36px;background:#838ded"></div>
<div class="seg" style="left:594.7px;top:908px;width:6.2px;height:36px;background:#71d584"></div>
<div class="seg" style="left:600.5px;top:908px;width:42.0px;height:36px;background:#dcd6f8"></div>
<div class="seg" style="left:642.1px;top:908px;width:2.2px;height:36px;background:#f6c0c8"></div>
<div class="seg" style="left:643.9px;top:908px;width:11.3px;height:36px;background:#b8f0d0"></div>
<div class="seg" style="left:654.8px;top:908px;width:9.5px;height:36px;background:#fbf3c8"></div>
<div class="seg" style="left:663.9px;top:908px;width:5.5px;height:36px;background:#e2e6f9"></div>
<div class="seg" style="left:669px;top:908px;width:2.7px;height:36px;background:#d8f5ee"></div>
<div class="seg" style="left:671.3px;top:908px;width:1.8px;height:36px;background:#f6c89a"></div>
<div class="seg" style="left:672.7px;top:908px;width:22.3px;height:36px;background:#eefbcc"></div>
<div class="seg" style="left:694.6px;top:908px;width:20.0px;height:36px;background:#d5f5fa"></div>
<div class="seg" style="left:714.2px;top:908px;width:13.6px;height:36px;background:#f8e5f0"></div>
<div class="seg" style="left:275px;top:973px;width:2.9px;height:37px;background:#a0c1f5"></div>
<div class="seg" style="left:277.5px;top:973px;width:2.9px;height:37px;background:#f0a9a6"></div>
<div class="seg" style="left:280px;top:973px;width:7.3px;height:37px;background:#8fe3b9"></div>
<div class="seg" style="left:286.9px;top:973px;width:2.7px;height:37px;background:#f8d56b"></div>
<div class="seg" style="left:289.2px;top:973px;width:2.2px;height:37px;background:#c3b8f7"></div>
<div class="seg" style="left:291px;top:973px;width:2.2px;height:37px;background:#ebadd2"></div>
<div class="seg" style="left:292.8px;top:973px;width:1.8px;height:37px;background:#a8b4f5"></div>
<div class="seg" style="left:294.2px;top:973px;width:3.1px;height:37px;background:#f3bb80"></div>
<div class="seg" style="left:296.9px;top:973px;width:2.0px;height:37px;background:#c9ee7a"></div>
<div class="seg" style="left:298.5px;top:973px;width:3.4px;height:37px;background:#d883f2"></div>
<div class="seg" style="left:301.5px;top:973px;width:2.7px;height:37px;background:#9de8a8"></div>
<div class="seg" style="left:303.8px;top:973px;width:1.8px;height:37px;background:#a28bef"></div>
<div class="seg" style="left:305.2px;top:973px;width:2.9px;height:37px;background:#e27db0"></div>
<div class="seg" style="left:307.7px;top:973px;width:8.4px;height:37px;background:#dcd6f8"></div>
<div class="seg" style="left:315.7px;top:973px;width:4.0px;height:37px;background:#b8f0d0"></div>
<div class="seg" style="left:319.3px;top:973px;width:3.6px;height:37px;background:#eefbcc"></div>
<div class="seg" style="left:322.5px;top:973px;width:4.9px;height:37px;background:#d5f5fa"></div>
<div class="num" style="left:1579px;top:850px">35,882</div>
<div class="num" style="left:742px;top:916px">14,336</div>
<div class="num" style="left:341px;top:981px">2,142</div>
<div class="num" style="left:289px;top:1047px">23</div>
<div class="abs" style="left:275px;top:1038px;width:1px;height:37px;background:#d8d8d0"></div>

<div class="abs" style="left:19px;top:1040px;width:36px;height:36px;border-radius:8px;background:#386341;border:1px solid #2a552f;color:#fff;font-weight:bold;font-size:16px;text-align:center;line-height:34px">M</div>
<!-- scrollbar -->

<div class="abs" style="left:1900px;top:52px;width:20px;height:1043px;background:#f8f8f5;border-left:1px solid #e4e4de"></div>
<div class="abs" style="left:1904px;top:259px;width:13px;height:259px;border-radius:7px;background:#7d7d7d"></div>
<svg class="abs" style="left:0;top:1075px" width="22" height="20" viewBox="0 0 22 20"><path d="M0 0 A20 20 0 0 0 20 20 L0 20Z" fill="#0b0e1a"/><path d="M0 0 A20 20 0 0 0 20 20" fill="none" stroke="#6f84b5" stroke-width="1.5"/></svg>
<svg class="abs" style="left:1896px;top:1071px" width="24" height="24" viewBox="0 0 24 24"><path d="M24 12 A12 12 0 0 1 12 24 L24 24Z" fill="#0b0e1a"/></svg>
</body></html>
